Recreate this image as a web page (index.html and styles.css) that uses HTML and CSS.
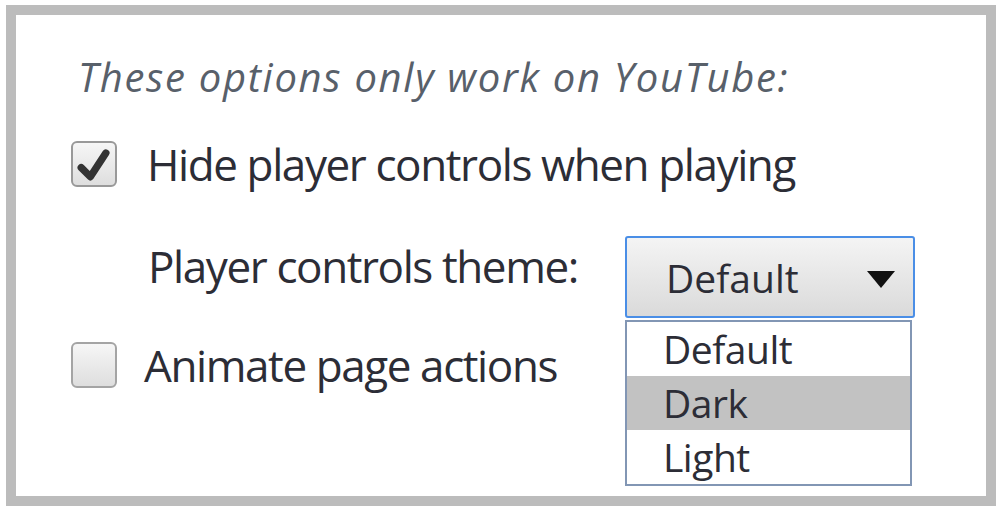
FILE: index.html
```html
<!DOCTYPE html>
<html lang="en">
<head>
    <meta charset="UTF-8">
    <title>YouTube options</title>
    <link rel="stylesheet" href="styles.css">
</head>
<body>
    <div class="panel">
        <p class="note">These options only work on YouTube:</p>

        <div class="check-row">
            <span class="box checked">
                <svg viewBox="0 0 46 46" width="42" height="42">
                    <path d="M9 27 L19 37 L36 11" fill="none" stroke="#333" stroke-width="8" stroke-linecap="round" stroke-linejoin="round"/>
                </svg>
            </span>
            <span class="label">Hide player controls when playing</span>
        </div>

        <div class="theme-row">
            <span class="label theme-label">Player controls theme:</span>
            <div class="select">
                <span class="select-value">Default</span>
                <svg class="arrow" viewBox="0 0 28 17" width="28" height="17">
                    <polygon points="0,0 28,0 14,17" fill="#111"/>
                </svg>
                <!-- open menu of the select -->
                <ul class="menu">
                    <li>Default</li>
                    <li class="active">Dark</li>
                    <li>Light</li>
                </ul>
            </div>
        </div>

        <div class="check-row last">
            <span class="box"></span>
            <span class="label">Animate page actions</span>
        </div>
    </div>
</body>
</html>
```

FILE: styles.css
```css
body {
    margin: 0;
    background: #fff;
    font-family: 'Open Sans', 'Noto Sans', sans-serif;
    color: #2c2d36;
}

.panel {
    margin: 5px 4px 0 6px;
    height: 481px;
    border: 10px solid #bcbcbc;
    padding-left: 52px;
}

.note {
    margin: 0;
    padding: 36px 0 0 10px;
    font-style: italic;
    font-size: 40px;
    line-height: 52px;
    letter-spacing: 1.7px;
    color: #58606a;
}

.check-row {
    display: flex;
    align-items: flex-start;
    margin-top: 38px;
    height: 46px;
}
.check-row.last {
    margin-top: 24px;
}

.box {
    width: 42px;
    height: 42px;
    margin-left: 3px;
    border: 2px solid #a4a4a4;
    border-radius: 6px;
    background: linear-gradient(#f6f6f6, #dedede);
    flex-shrink: 0;
}
.box svg {
    display: block;
}
.box.checked {
    border-color: #999;
}

.label {
    font-size: 44px;
    line-height: 46px;
    letter-spacing: -1.4px;
    margin-left: 30px;
    white-space: nowrap;
}
.last .label {
    margin-left: 27px;
}

.theme-row {
    display: flex;
    align-items: flex-start;
    margin-top: 49px;
}
.theme-label {
    margin: 7px 0 0 80px;
    width: 477px;
}

.select {
    position: relative;
    width: 286px;
    height: 78px;
    border: 2px solid #4a8ee6;
    border-radius: 3px;
    background: linear-gradient(#f4f4f4, #dadada);
    display: flex;
    align-items: center;
}
.select-value {
    margin-left: 39px;
    font-size: 39px;
    flex: 1;
}
.arrow {
    margin-right: 18px;
    margin-top: 4px;
}

.menu {
    position: absolute;
    top: 82px;
    left: -2px;
    width: 283px;
    margin: 0;
    padding: 0;
    list-style: none;
    border: 2px solid #8296b4;
    background: #fff;
}
.menu li {
    height: 54px;
    line-height: 54px;
    padding-left: 36px;
    font-size: 39px;
    letter-spacing: -0.5px;
}
.menu li.active {
    background: #c2c2c2;
}
```
